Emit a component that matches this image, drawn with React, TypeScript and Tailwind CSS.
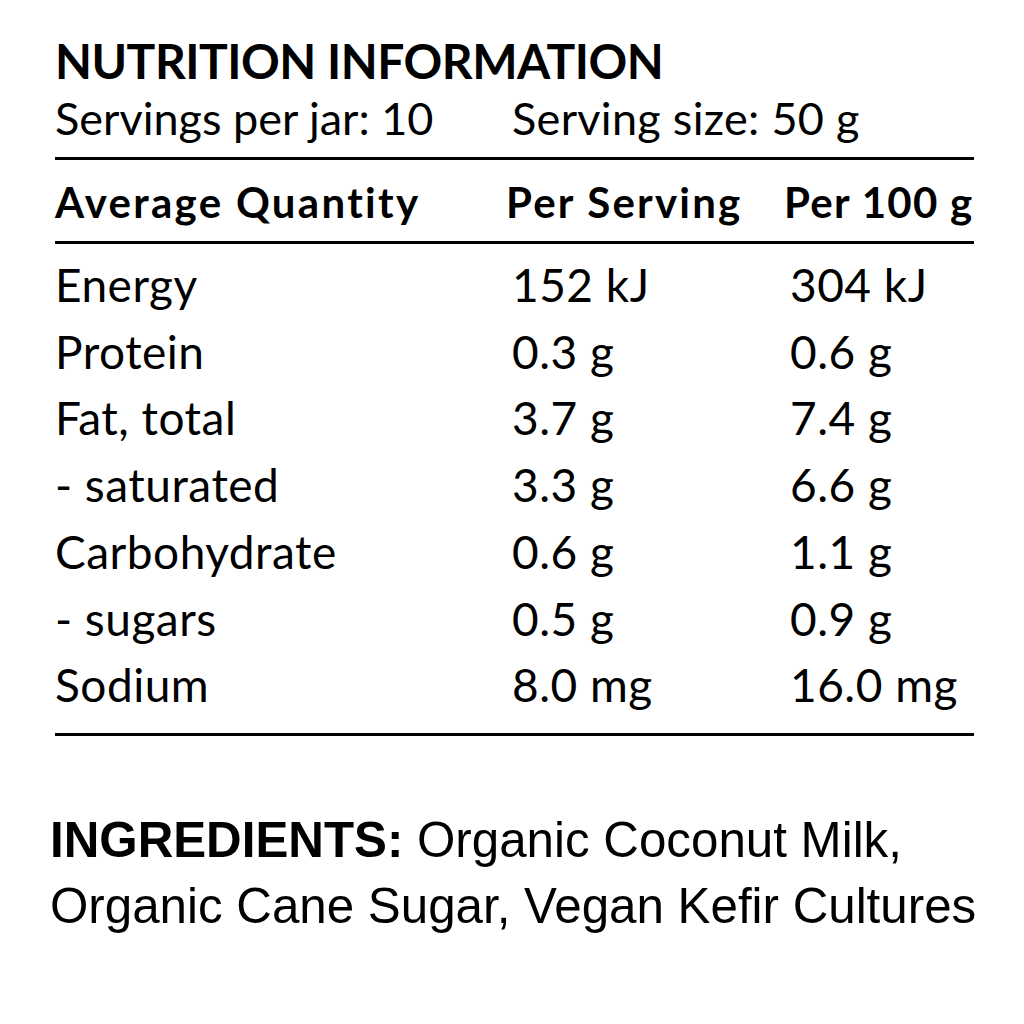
const rows = [
  { name: "Energy", serving: "152 kJ", per100: "304 kJ" },
  { name: "Protein", serving: "0.3 g", per100: "0.6 g" },
  { name: "Fat, total", serving: "3.7 g", per100: "7.4 g" },
  { name: "- saturated", serving: "3.3 g", per100: "6.6 g" },
  { name: "Carbohydrate", serving: "0.6 g", per100: "1.1 g" },
  { name: "- sugars", serving: "0.5 g", per100: "0.9 g" },
  { name: "Sodium", serving: "8.0 mg", per100: "16.0 mg" },
];

export default function App() {
  return (
    <div className="w-[1024px] h-[1024px] bg-white text-black">
      <div className="pl-[55px] pr-[50px] pt-[34px] font-['Lato',sans-serif]">
        <h1 className="text-[48px] leading-[54px] font-bold tracking-[-0.5px]">NUTRITION INFORMATION</h1>
        <div className="grid grid-cols-[457px_1fr] text-[45px] leading-[60px] whitespace-nowrap">
          <span>Servings per jar: 10</span>
          <span className="tracking-[0.3px]">Serving size: 50 g</span>
        </div>
        <div className="border-t-[3px] border-black mt-[9px]" />
        {/* column headings */}
        <div className="grid grid-cols-[451px_278px_1fr] pt-[4px] text-[42px] leading-[77px] font-bold whitespace-nowrap">
          <span className="tracking-[2.3px]">Average Quantity</span>
          <span className="tracking-[2.2px]">Per Serving</span>
          <span className="tracking-[1.3px]">Per 100 g</span>
        </div>
        <div className="border-t-[3px] border-black" />
        <div className="pt-[8px] pb-[14px]">
          {rows.map((r) => (
            <div
              key={r.name}
              className="grid grid-cols-[457px_278px_1fr] text-[46px] leading-[66.7px] tracking-[0.5px] whitespace-nowrap"
            >
              <span>{r.name}</span>
              <span>{r.serving}</span>
              <span>{r.per100}</span>
            </div>
          ))}
        </div>
        <div className="border-t-[3px] border-black" />
      </div>
      <p className="pl-[50px] pt-[71px] font-['Liberation_Sans',Arial,sans-serif] text-[49.3px] leading-[66px] whitespace-nowrap">
        <span className="font-bold">INGREDIENTS:</span> Organic Coconut Milk,
        <br />
        Organic Cane Sugar, Vegan Kefir Cultures
      </p>
    </div>
  );
}
